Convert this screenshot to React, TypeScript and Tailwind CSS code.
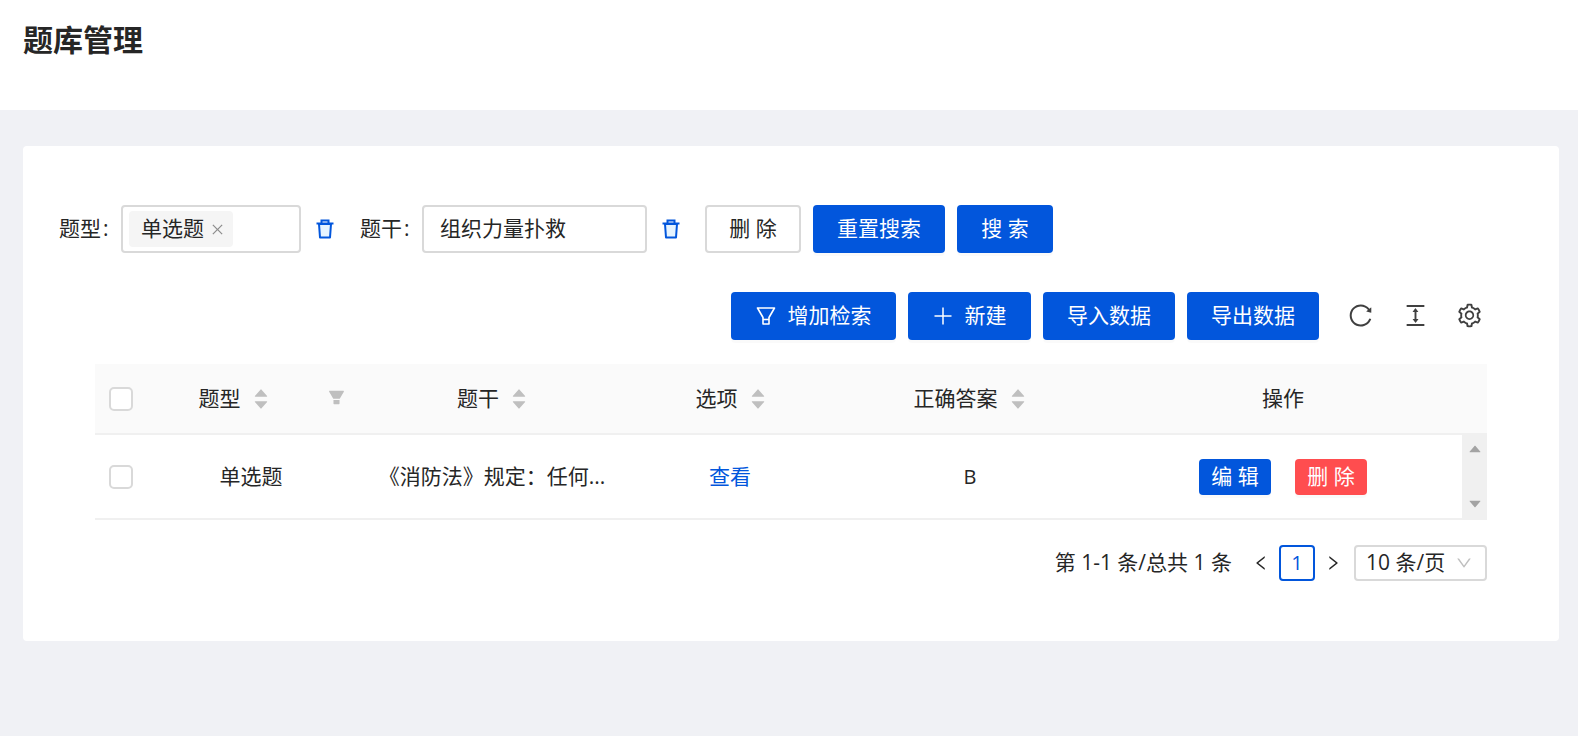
import React from 'react';
import {
  AiFillCaretDown,
  AiFillCaretUp,
  AiFillFilter,
  AiOutlineClose,
  AiOutlineColumnHeight,
  AiOutlineDown,
  AiOutlineLeft,
  AiOutlineReload,
  AiOutlineRight,
  AiOutlineSetting,
} from 'react-icons/ai';

const FONT = 'font-["Open_Sans","Noto_Sans_CJK_SC",sans-serif]';
const GRID = 'grid grid-cols-[52px_210px_274px_198px_282px_344px_1fr] items-center';

function TrashIcon() {
  return (
    <svg width="20" height="22" viewBox="0 0 20 22" className="ml-[14px] shrink-0">
      <path d="M4 6h12l-1 13.5H5z" fill="#e6f4ff" stroke="#0256dc" strokeWidth="2" strokeLinejoin="round" />
      <path d="M1.5 5.5h17" stroke="#0256dc" strokeWidth="2" />
      <path d="M6.5 5V2.5h7V5" fill="none" stroke="#0256dc" strokeWidth="2" />
    </svg>
  );
}

function FunnelIcon() {
  return (
    <svg width="20" height="20" viewBox="0 0 20 20" className="mr-[12px] shrink-0" fill="none" stroke="currentColor" strokeWidth="1.6">
      <path d="M1.5 2h17l-5.5 9.5v6.5H7v-6.5z" strokeLinejoin="round" />
      <path d="M7 13.5h6" />
    </svg>
  );
}

function PlusIcon() {
  return (
    <svg width="20" height="20" viewBox="0 0 20 20" className="mr-[12px] shrink-0" fill="none" stroke="currentColor" strokeWidth="1.5">
      <path d="M10 1.5v17M1.5 10h17" />
    </svg>
  );
}

function SortCarets() {
  return (
    <span className="ml-[11px] flex flex-col text-[#bfbfbf] text-[18px] leading-none">
      <AiFillCaretUp className="-mb-[6px]" />
      <AiFillCaretDown />
    </span>
  );
}

function Checkbox() {
  return <span className="ml-[14px] block h-[24px] w-[24px] rounded-[5px] border-2 border-[#d9d9d9] bg-white" />;
}

function SolidButton({ width, children }: { width: string; children: React.ReactNode }) {
  return (
    <button className={`${width} flex h-[48px] items-center justify-center rounded-[4px] bg-[#0256dc] text-white shadow-[0_3px_0_rgba(0,0,0,0.02)]`}>
      {children}
    </button>
  );
}

export default function App() {
  return (
    <div className={`${FONT} min-h-screen bg-[#f0f1f5] text-[21px] text-[#262626]`}>
      {/* Header */}
      <div className="h-[110px] bg-white pl-[23px] pt-[18px]">
        <h1 className="text-[30px] font-bold leading-[44px] text-[#262626]">题库管理</h1>
      </div>

      {/* Card */}
      <div className="ml-[23px] mt-[36px] h-[495px] w-[1536px] rounded-[4px] bg-white pt-[59px]">
        {/* Search row */}
        <div className="flex h-[48px] items-center pl-[36px]">
          <span className="w-[62px]">题型<span className="ml-[2px]">:</span></span>
          <div className="flex h-[48px] w-[180px] items-center rounded-[4px] border-2 border-[#d9d9d9] pl-[6px]">
            <span className="flex h-[36px] w-[104px] items-center rounded-[4px] bg-[#f5f5f5] pl-[12px]">
              单选题
              <AiOutlineClose className="ml-[6px] text-[15px] text-[#8c8c8c]" />
            </span>
          </div>
          <TrashIcon />
          <span className="ml-[25px] w-[62px]">题干<span className="ml-[2px]">:</span></span>
          <div className="flex h-[48px] w-[225px] items-center rounded-[4px] border-2 border-[#d9d9d9] pl-[16px]">
            组织力量扑救
          </div>
          <TrashIcon />
          <button className="ml-[24px] flex h-[48px] w-[96px] items-center justify-center rounded-[4px] border-2 border-[#d9d9d9] bg-white">
            删 除
          </button>
          <div className="ml-[12px] flex gap-[12px]">
            <SolidButton width="w-[132px]">重置搜索</SolidButton>
            <SolidButton width="w-[96px]">搜 索</SolidButton>
          </div>
        </div>

        {/* Toolbar */}
        <div className="mt-[39px] flex h-[48px] items-center pl-[708px]">
          <div className="flex gap-[12px]">
            <SolidButton width="w-[165px]">
              <FunnelIcon />
              增加检索
            </SolidButton>
            <SolidButton width="w-[123px]">
              <PlusIcon />
              新建
            </SolidButton>
            <SolidButton width="w-[132px]">导入数据</SolidButton>
            <SolidButton width="w-[132px]">导出数据</SolidButton>
          </div>
          <div className="mb-[2px] ml-[28px] flex gap-[27.5px] text-[#404040]">
            <AiOutlineReload className="h-[27px] w-[27px]" />
            <AiOutlineColumnHeight className="h-[27px] w-[27px]" />
            <AiOutlineSetting className="h-[27px] w-[27px]" />
          </div>
        </div>

        {/* Table */}
        <div className="ml-[72px] mt-[24px] w-[1392px]">
          <div className={`${GRID} h-[71px] border-b-2 border-[#f0f0f0] bg-[#fafafa]`}>
            <Checkbox />
            <div className="relative flex h-full items-center justify-center pr-[36px]">
              <span className="flex items-center">题型<SortCarets /></span>
              <AiFillFilter className="absolute right-[11px] top-[24px] text-[19px] text-[#bfbfbf]" />
            </div>
            <div className="flex justify-center pr-[3px]"><span className="flex items-center">题干<SortCarets /></span></div>
            <div className="flex justify-center pl-[2px]"><span className="flex items-center">选项<SortCarets /></span></div>
            <div className="flex justify-center"><span className="flex items-center">正确答案<SortCarets /></span></div>
            <div className="text-center">操作</div>
            <div />
          </div>
          <div className={`${GRID} relative h-[85px] border-b-2 border-[#f0f0f0]`}>
            <Checkbox />
            <div className="pr-[2px] text-center">单选题</div>
            <div className="pr-[4px] text-center">《消防法》规定：任何...</div>
            <div className="text-center text-[#0256dc]">查看</div>
            <div className="text-center text-[20px]">B</div>
            <div className="flex justify-center gap-[24px]">
              <button className="h-[36px] w-[72px] rounded-[4px] bg-[#0256dc] text-white shadow-[0_3px_0_rgba(0,0,0,0.02)]">编 辑</button>
              <button className="h-[36px] w-[72px] rounded-[4px] bg-[#ff4d4f] text-white shadow-[0_3px_0_rgba(0,0,0,0.02)]">删 除</button>
            </div>
            <div />
            {/* Scrollbar */}
            <div className="absolute right-0 top-0 flex h-full w-[25px] flex-col items-center justify-between bg-[#f0f0f0] py-[6px] text-[16px] text-[#a3a3a3]">
              <AiFillCaretUp />
              <AiFillCaretDown />
            </div>
          </div>

          {/* Pagination */}
          <div className="mt-[25px] flex h-[36px] items-center justify-end">
            <span>第 1-1 条/总共 1 条</span>
            <AiOutlineLeft className="ml-[20px] text-[18px]" />
            <span className="ml-[9px] flex h-[36px] w-[36px] items-center justify-center rounded-[4px] border-2 border-[#0256dc] text-[20px] text-[#0256dc]">1</span>
            <AiOutlineRight className="ml-[9px] text-[18px]" />
            <div className="ml-[12px] flex h-[36px] w-[133px] items-center justify-between rounded-[4px] border-2 border-[#d9d9d9] pl-[10px] pr-[12px]">
              10 条/页
              <AiOutlineDown className="text-[18px] text-[#bfbfbf]" />
            </div>
          </div>
        </div>
      </div>
    </div>
  );
}
